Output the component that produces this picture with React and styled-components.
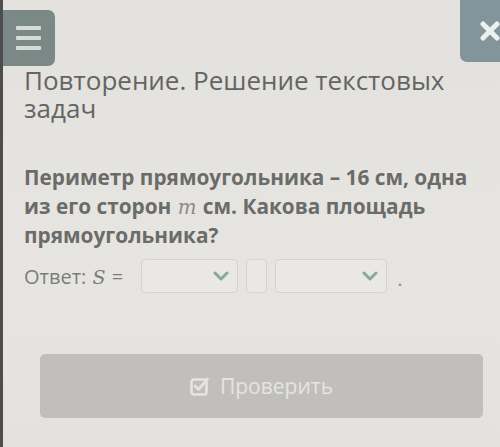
import styled, { createGlobalStyle } from 'styled-components';

const GlobalStyle = createGlobalStyle`
    html, body {
        margin: 0;
        padding: 0;
        background: #e4e2de;
    }
    body {
        font-family: 'Open Sans', 'Noto Sans', sans-serif;
    }
`;

function Chevron (){
    return (
        <svg width="16" height="10" viewBox="0 0 16 10">
            <path d="M2 2 L8 8 L14 2" fill="none" stroke="#86a89d" strokeWidth="3" strokeLinecap="round" strokeLinejoin="round" />
        </svg>
    )
}

function CheckIcon (){
    return (
        <svg width="20" height="20" viewBox="0 0 20 20">
            <rect x="1.5" y="3.5" width="15" height="15" rx="2.5" fill="none" stroke="#e6e4e1" strokeWidth="2.6" />
            <path d="M5 10 L8.5 13.5 L17.5 3" fill="none" stroke="#e6e4e1" strokeWidth="2.8" strokeLinecap="round" strokeLinejoin="round" />
        </svg>
    )
}

function App (){
    return (
        <Page>
            <GlobalStyle />
            <Header>
                <MenuButton>
                    <span></span>
                    <span></span>
                    <span></span>
                </MenuButton>
                <CloseButton>
                    <svg width="22" height="22" viewBox="0 0 22 22">
                        <path d="M4 4 L18 18 M18 4 L4 18" stroke="#eef0ee" strokeWidth="5" strokeLinecap="round" />
                    </svg>
                </CloseButton>
            </Header>

            <Content>
                <Title>Повторение. Решение текстовых задач</Title>

                <Question>
                    Периметр прямоугольника – 16 см, одна из его сторон <MathVar>m</MathVar> см. Какова площадь прямоугольника?
                </Question>

                <AnswerRow>
                    <Label>Ответ: <MathVar $light>S</MathVar> =</Label>
                    <Select $width={97}><Chevron /></Select>
                    <Box />
                    <Select $width={112}><Chevron /></Select>
                    <Dot>.</Dot>
                </AnswerRow>

                <CheckButton>
                    <CheckIcon />
                    <span>Проверить</span>
                </CheckButton>
            </Content>
        </Page>
    )
}

export default App;

// & CSS COMPONENTS

const Page = styled.div`
    box-sizing: border-box;
    width: 500px;
    height: 447px;
    overflow: hidden;
    border-left: 3px solid #4c4d4c;
    background: linear-gradient(180deg, #e3e1dd 0%, #e7e5e1 60%, #e4e2de 100%);
`

const Header = styled.div`
    display: flex;
    justify-content: space-between;
    align-items: flex-start;
    height: 66px;
`

const MenuButton = styled.div`
    box-sizing: border-box;
    margin-top: 10px;
    width: 52px;
    height: 56px;
    border-radius: 0 7px 7px 0;
    background: #7a8985;
    display: flex; flex-direction: column; justify-content: center;
    gap: 6px;
    padding-left: 13px;

    span {
        display: block;
        width: 25px;
        height: 4px;
        background: #d6dbd8;
        border-radius: 1px;
    }
`

const CloseButton = styled.div`
    width: 60px;
    height: 62px;
    margin-right: -20px;
    border-radius: 0 0 0 7px;
    background: #83959a;
    display: flex; align-items: center; justify-content: center;
`

const Content = styled.div`
    padding: 0 17px 0 21px;
`

const Title = styled.h1`
    margin: 0;
    font-size: 26px;
    line-height: 28px;
    font-weight: 400;
    color: #636563;
`

const Question = styled.p`
    margin: 41px 0 0 0;
    font-size: 20.8px;
    line-height: 29px;
    font-weight: 700;
    color: #6a6c6a;
`

const MathVar = styled.i`
    display: inline-block;
    margin: 0 1px;
    font-family: 'DejaVu Serif', 'Liberation Serif', serif;
    font-weight: 400;
    font-style: italic;
    font-size: 0.95em;
    line-height: 1;
    color: ${p => p.$light ? '#7a7c7a' : '#8a8c8a'};
`

const AnswerRow = styled.div`
    display: flex;
    align-items: center;
    gap: 8px;
    margin-top: 9px;
    height: 34px;
    font-size: 20px;
    color: #7b7d7b;
`

const Label = styled.span`
    margin-right: 10px;
    white-space: nowrap;
`

const Select = styled.div`
    box-sizing: border-box;
    width: ${p => p.$width}px;
    height: 34px;
    border: 1.5px solid #d2d2ce;
    border-radius: 4px;
    background: #e9e8e5;
    display: flex; align-items: center; justify-content: flex-end;
    padding-right: 8px;
`

const Box = styled.div`
    box-sizing: border-box;
    width: 21px;
    height: 34px;
    border: 1.5px solid #d2d2ce;
    border-radius: 4px;
    background: #e9e8e5;
`

const Dot = styled.span`
    margin-left: 2px;
    align-self: flex-end;
    line-height: 28px;
    color: #8a8c8a;
`

const CheckButton = styled.div`
    margin: 61px 0 0 16px;
    height: 64px;
    border-radius: 5px;
    background: #c1bfbc;
    display: flex; align-items: center; justify-content: center;
    gap: 10px;
    color: #e6e4e1;
    font-size: 21px;
`
